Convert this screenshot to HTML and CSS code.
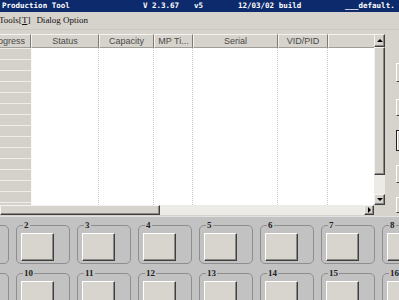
FILE: index.html
```html
<!DOCTYPE html>
<html>
<head>
<meta charset="utf-8">
<link rel="stylesheet" href="styles.css">
</head>
<body>
<div class="window">
  <div class="titlebar">
    <span>Production Tool</span><span>V 2.3.67</span><span>v5</span><span>12/03/02 build</span><span>___default.</span>
  </div>
  <div class="menubar">
    <span>Tools[<u>T</u>]</span><span>Dialog Option</span>
  </div>
  <div class="main">
    <div class="list">
      <div class="content">
        <div class="inner">
          <div class="header">
            <div class="hcell w-prog">Progress</div>
            <div class="hcell w-status">Status</div>
            <div class="hcell w-cap">Capacity</div>
            <div class="hcell w-mp">MP Ti...</div>
            <div class="hcell w-serial">Serial</div>
            <div class="hcell w-vid">VID/PID</div>
            <div class="hcell w-rest"></div>
          </div>
          <div class="body">
            <div class="prog-col w-prog">
              <div class="prow"></div><div class="prow"></div><div class="prow"></div><div class="prow"></div><div class="prow"></div>
              <div class="prow"></div><div class="prow"></div><div class="prow"></div><div class="prow"></div><div class="prow"></div>
              <div class="prow"></div><div class="prow"></div><div class="prow"></div><div class="prow"></div><div class="prow"></div>
            </div>
            <div class="col w-status"></div>
            <div class="col w-cap"></div>
            <div class="col w-mp"></div>
            <div class="col w-serial"></div>
            <div class="col w-vid"></div>
            <div class="col w-rest"></div>
          </div>
        </div>
      </div>
      <div class="vscroll">
        <div class="sb-btn up"><i class="arr-up"></i></div>
        <div class="sb-btn vthumb"></div>
        <div class="track"></div>
        <div class="sb-btn down"><i class="arr-down"></i></div>
      </div>
      <div class="hscroll">
        <div class="sb-btn hthumb"></div>
        <div class="track"></div>
        <div class="sb-btn right"><i class="arr-right"></i></div>
      </div>
      <div class="corner"></div>
    </div>
    <div class="side">
      <div class="sbtn b1"></div>
      <div class="sbtn b2"></div>
      <div class="sbtn b3 default"></div>
      <div class="sbtn b4"></div>
      <div class="sbtn b5"></div>
    </div>
  </div>
  <div class="panel">
    <div class="grid">
      <fieldset class="group"><legend>1</legend><div class="slot"></div></fieldset>
      <fieldset class="group"><legend>2</legend><div class="slot"></div></fieldset>
      <fieldset class="group"><legend>3</legend><div class="slot"></div></fieldset>
      <fieldset class="group"><legend>4</legend><div class="slot"></div></fieldset>
      <fieldset class="group"><legend>5</legend><div class="slot"></div></fieldset>
      <fieldset class="group"><legend>6</legend><div class="slot"></div></fieldset>
      <fieldset class="group"><legend>7</legend><div class="slot"></div></fieldset>
      <fieldset class="group"><legend>8</legend><div class="slot"></div></fieldset>
      <fieldset class="group"><legend>9</legend><div class="slot"></div></fieldset>
      <fieldset class="group"><legend>10</legend><div class="slot"></div></fieldset>
      <fieldset class="group"><legend>11</legend><div class="slot"></div></fieldset>
      <fieldset class="group"><legend>12</legend><div class="slot"></div></fieldset>
      <fieldset class="group"><legend>13</legend><div class="slot"></div></fieldset>
      <fieldset class="group"><legend>14</legend><div class="slot"></div></fieldset>
      <fieldset class="group"><legend>15</legend><div class="slot"></div></fieldset>
      <fieldset class="group"><legend>16</legend><div class="slot"></div></fieldset>
    </div>
  </div>
</div>
</body>
</html>
```
FILE: styles.css
```css
html, body {
  margin: 0;
  padding: 0;
}
body {
  width: 399px;
  height: 300px;
  overflow: hidden;
  background: #c0c0c0;
  font-family: "Liberation Sans", Arial, sans-serif;
}
.window {
  width: 399px;
  height: 300px;
  overflow: hidden;
  background: #d6d3cc;
}
.titlebar {
  height: 12px;
  background: #0c2a6c;
  color: #fff;
  font: bold 7.5px/12px "DejaVu Sans Mono", monospace;
  display: grid;
  grid-template-columns: 141px 51px 44px 107px auto;
  padding-left: 2px;
  white-space: nowrap;
  overflow: hidden;
}
.menubar {
  height: 18px;
  display: flex;
  gap: 6px;
  margin-left: -1px;
  font: 9px/16px "Liberation Serif", serif;
  color: #111;
  white-space: nowrap;
  box-sizing: border-box;
  border-bottom: 1px solid #cbc8c1;
}
.main {
  display: flex;
  height: 186px;
  padding-top: 4px;
  box-sizing: border-box;
}
.list {
  width: 385px;
  display: grid;
  grid-template-columns: 374px 11px;
  grid-template-rows: 171px 10px;
}
.content {
  overflow: hidden;
  background: #fff;
}
.inner {
  margin-left: -17px;
  width: max-content;
}
.header {
  display: flex;
  height: 14px;
}
.hcell {
  box-sizing: border-box;
  height: 14px;
  background: #d6d3cc;
  border-top: 1px solid #f4f3f0;
  border-left: 1px solid #f4f3f0;
  border-right: 1px solid #7c7a76;
  border-bottom: 1px solid #a09d98;
  font-size: 9px;
  line-height: 12px;
  text-align: center;
  color: #4a4a4a;
  overflow: hidden;
  white-space: nowrap;
}
.w-prog { width: 48px; }
.w-status { width: 68px; }
.w-cap { width: 55px; }
.w-mp { width: 39px; }
.w-serial { width: 85px; }
.w-vid { width: 50px; }
.w-rest { width: 60px; }
.body {
  display: flex;
  height: 157px;
}
.prog-col {
  background: #d4d1ca;
  overflow: hidden;
}
.prow {
  height: 10px;
  border-top: 1px solid #efede9;
}
.col {
  box-sizing: border-box;
  border-right: 1px dotted #c9c9c9;
}
.col.w-status {
  border-left: 1px solid #fafafa;
}
.sb-btn {
  box-sizing: border-box;
  background: #d6d3cc;
  border: 1px solid;
  border-color: #f4f3f0 #404040 #404040 #f4f3f0;
  box-shadow: inset -1px -1px #8a8884;
  display: flex;
  align-items: center;
  justify-content: center;
}
.vscroll {
  display: flex;
  flex-direction: column;
  background: #ecebe6;
}
.up { height: 13px; }
.vthumb { height: 128px; }
.track { flex: 1; background: #ecebe6; }
.down { height: 11px; }
.hscroll {
  display: flex;
  background: #ecebe6;
}
.hthumb { width: 160px; }
.right { width: 10px; }
.corner { background: #d6d3cc; }
.arr-up {
  width: 0; height: 0;
  border-left: 3px solid transparent;
  border-right: 3px solid transparent;
  border-bottom: 3px solid #000;
}
.arr-down {
  width: 0; height: 0;
  border-left: 3px solid transparent;
  border-right: 3px solid transparent;
  border-top: 3px solid #000;
}
.arr-right {
  width: 0; height: 0;
  border-top: 3px solid transparent;
  border-bottom: 3px solid transparent;
  border-left: 3px solid #000;
}
.side {
  width: 14px;
  overflow: hidden;
  display: flex;
  flex-direction: column;
  background: #d6d3cc;
}
.sbtn {
  flex: none;
  width: 30px;
  margin-left: 11px;
  box-sizing: border-box;
  background: #d6d3cc;
  border: 1px solid;
  border-color: #fff #404040 #404040 #fff;
}
.sbtn.default { border-color: #222; box-shadow: inset 1px 1px #fff; }
.b1 { margin-top: 29px; height: 19px; }
.b2 { margin-top: 17px; height: 17px; }
.b3 { margin-top: 14px; height: 21px; }
.b4 { margin-top: 14px; height: 18px; }
.b5 { margin-top: 14px; height: 16px; }
.panel {
  height: 84px;
  box-sizing: border-box;
  background: #c2c2c2;
  border-top: 1px solid #e2e2e2;
  padding-top: 4px;
  overflow: hidden;
}
.grid {
  display: grid;
  grid-template-columns: repeat(8, 54px);
  column-gap: 7px;
  row-gap: 5px;
  margin-left: -45px;
  width: max-content;
}
.group {
  margin: 0;
  padding: 4px 0 0 4px;
  min-width: 0;
  height: 43px;
  box-sizing: border-box;
  border: 1px solid #8e8e8e;
  border-radius: 5px;
}
.group legend {
  padding: 0 1px;
  margin-left: 2px;
  font: bold 9px/8px "Liberation Serif", serif;
  color: #222;
}
.slot {
  width: 33px;
  height: 28px;
  box-sizing: border-box;
  background: #d8d5cf;
  border: 1px solid;
  border-color: #fff #404040 #404040 #fff;
  box-shadow: inset -1px -1px #8a8884;
}
```
